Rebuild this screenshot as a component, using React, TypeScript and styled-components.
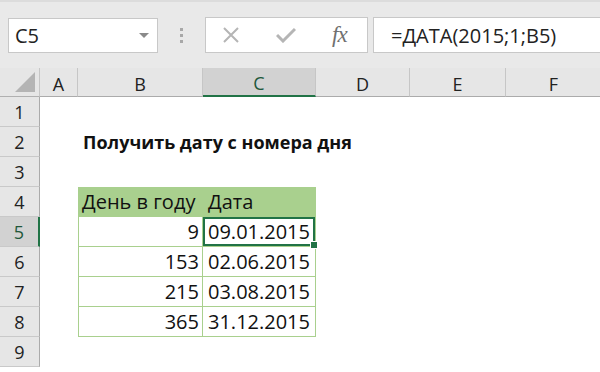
import React from 'react';
import styled, { createGlobalStyle } from 'styled-components';

const GlobalStyle = createGlobalStyle`
    html, body {
        margin: 0;
        padding: 0;
        background: #fff;
    }
    body {
        font-family: 'Open Sans', 'Noto Sans', sans-serif;
        overflow: hidden;
    }
`;

const Window = styled.div`
    width: 600px;
    height: 372px;
    overflow: hidden;
    background: #fff;
`;

const FormulaBar = styled.div`
    height: 68px;
    box-sizing: border-box;
    background: #e9e9e9;
    border-top: 2px solid #dcdcdc;
    display: flex;
    align-items: center;
    padding: 0 0 0 8px;
    color: #222;
`;

const NameBox = styled.div`
    width: 150px;
    height: 35px;
    box-sizing: border-box;
    background: #fff;
    border: 1px solid #c8c8c8;
    display: flex;
    align-items: center;
    justify-content: space-between;
    padding: 0 8px 0 6px;
    font-size: 20px;
`;

const Caret = styled.span`
    width: 0;
    height: 0;
    border-left: 5px solid transparent;
    border-right: 5px solid transparent;
    border-top: 5px solid #8a8a8a;
`;

const Grip = styled.div`
    width: 47px;
    display: flex;
    flex-direction: column;
    align-items: center;
    gap: 3px;
    span {
        width: 3px;
        height: 3px;
        background: #a8a8a8;
    }
`;

const ActionBox = styled.div`
    width: 163px;
    height: 36px;
    box-sizing: border-box;
    background: #fff;
    border: 1px solid #c8c8c8;
    display: flex;
    align-items: center;
    padding-left: 16px;
    gap: 36px;
`;

const Fx = styled.span`
    font-family: 'Liberation Serif', 'DejaVu Serif', serif;
    font-style: italic;
    font-size: 23px;
    color: #707070;
    letter-spacing: -1px;
`;

const FormulaInput = styled.div`
    flex: 1;
    height: 36px;
    margin-left: 5px;
    box-sizing: border-box;
    background: #fff;
    border: 1px solid #c8c8c8;
    border-right: none;
    display: flex;
    align-items: center;
    padding-left: 17px;
    font-size: 20px;
`;

const Sheet = styled.div`
    display: grid;
    grid-template-columns: 40px 38px 125px 113px 94px 96px 96px;
    grid-template-rows: 29px repeat(9, 30px);
    color: #111;
`;

const Corner = styled.div`
    background: #e6e6e6;
    border-right: 1px solid #c6c6c6;
    border-bottom: 1px solid #b0b0b0;
    position: relative;
    &::after {
        content: '';
        position: absolute;
        right: 4px;
        bottom: 4px;
        border-left: 20px solid transparent;
        border-bottom: 20px solid #b4b4b4;
    }
`;

const ColHead = styled.div<{ $active?: boolean }>`
    background: ${p => (p.$active ? '#d2d2d2' : '#e6e6e6')};
    border-right: 1px solid #c6c6c6;
    border-bottom: ${p => (p.$active ? '2px solid #217346' : '1px solid #ababab')};
    color: ${p => (p.$active ? '#21573a' : '#222')};
    font-size: 18px;
    display: flex;
    align-items: center;
    justify-content: center;
    padding-top: 3px;
    box-sizing: border-box;
`;

const RowHead = styled.div<{ $active?: boolean }>`
    background: ${p => (p.$active ? '#d2d2d2' : '#e6e6e6')};
    border-bottom: 1px solid #c9c9c9;
    border-right: ${p => (p.$active ? '2px solid #217346' : '1px solid #ababab')};
    color: ${p => (p.$active ? '#21573a' : '#222')};
    font-size: 18px;
    display: flex;
    align-items: center;
    justify-content: center;
    box-sizing: border-box;
`;

const Cell = styled.div<{
    $align?: 'left' | 'right';
    $bold?: boolean;
    $fill?: boolean;
    $boxed?: boolean;
    $first?: boolean;
    $selected?: boolean;
}>`
    position: relative;
    box-sizing: border-box;
    display: flex;
    align-items: center;
    justify-content: ${p => (p.$align === 'right' ? 'flex-end' : 'flex-start')};
    padding: 0 3px 0 ${p => (p.$first ? '3px' : '5px')};
    white-space: nowrap;
    font-weight: ${p => (p.$bold ? 700 : 400)};
    font-size: ${p => (p.$bold ? '18px' : '20px')};
    background: ${p => (p.$fill ? '#a9d08e' : 'transparent')};
    border-right: ${p => (p.$boxed ? '1px solid #a9d08e' : 'none')};
    border-bottom: ${p => (p.$boxed ? '1px solid #a9d08e' : 'none')};
    border-left: ${p => (p.$first ? '1px solid #a9d08e' : 'none')};
    ${p =>
        p.$selected &&
        `
        box-shadow: inset 0 0 0 2px #217346;
        &::after {
            content: '';
            position: absolute;
            right: -3px;
            bottom: -3px;
            width: 6px;
            height: 6px;
            background: #217346;
            border: 1px solid #fff;
            z-index: 2;
        }
    `}
`;

const columns = ['A', 'B', 'C', 'D', 'E', 'F'];

const tableRows = [
    { day: '9', date: '09.01.2015' },
    { day: '153', date: '02.06.2015' },
    { day: '215', date: '03.08.2015' },
    { day: '365', date: '31.12.2015' },
];

const XIcon = () => (
    <svg width="18" height="18" viewBox="0 0 18 18">
        <path d="M2 2 L16 16 M16 2 L2 16" stroke="#b5b5b5" strokeWidth="2" fill="none" />
    </svg>
);

const CheckIcon = () => (
    <svg width="20" height="16" viewBox="0 0 20 16">
        <path d="M1 8 L7 14 L19 2" stroke="#b5b5b5" strokeWidth="3" fill="none" />
    </svg>
);

const App: React.FC = () => {
    const renderRow = (r: number) => {
        const cells: React.ReactNode[] = [];
        cells.push(
            <RowHead key={`h${r}`} $active={r === 5}>
                {r}
            </RowHead>
        );
        cells.push(<Cell key={`a${r}`} />);
        if (r === 2) {
            cells.push(
                <Cell key={`b${r}`} $bold>
                    Получить дату с номера дня
                </Cell>
            );
            cells.push(<Cell key={`c${r}`} />);
        } else if (r === 4) {
            cells.push(
                <Cell key={`b${r}`} $fill $boxed $first>
                    День в году
                </Cell>
            );
            cells.push(
                <Cell key={`c${r}`} $fill $boxed>
                    Дата
                </Cell>
            );
        } else if (r >= 5 && r <= 8) {
            const row = tableRows[r - 5];
            cells.push(
                <Cell key={`b${r}`} $align="right" $boxed $first>
                    {row.day}
                </Cell>
            );
            cells.push(
                <Cell key={`c${r}`} $boxed $selected={r === 5}>
                    {row.date}
                </Cell>
            );
        } else {
            cells.push(<Cell key={`b${r}`} />);
            cells.push(<Cell key={`c${r}`} />);
        }
        cells.push(<Cell key={`d${r}`} />);
        cells.push(<Cell key={`e${r}`} />);
        cells.push(<Cell key={`f${r}`} />);
        return cells;
    };

    return (
        <Window>
            <GlobalStyle />
            <FormulaBar>
                <NameBox>
                    C5
                    <Caret />
                </NameBox>
                <Grip>
                    <span />
                    <span />
                    <span />
                </Grip>
                <ActionBox>
                    <XIcon />
                    <CheckIcon />
                    <Fx>fx</Fx>
                </ActionBox>
                <FormulaInput>=ДАТА(2015;1;B5)</FormulaInput>
            </FormulaBar>
            <Sheet>
                <Corner />
                {columns.map(c => (
                    <ColHead key={c} $active={c === 'C'}>
                        {c}
                    </ColHead>
                ))}
                {[1, 2, 3, 4, 5, 6, 7, 8, 9].map(r => renderRow(r))}
            </Sheet>
        </Window>
    );
};

export default App;
